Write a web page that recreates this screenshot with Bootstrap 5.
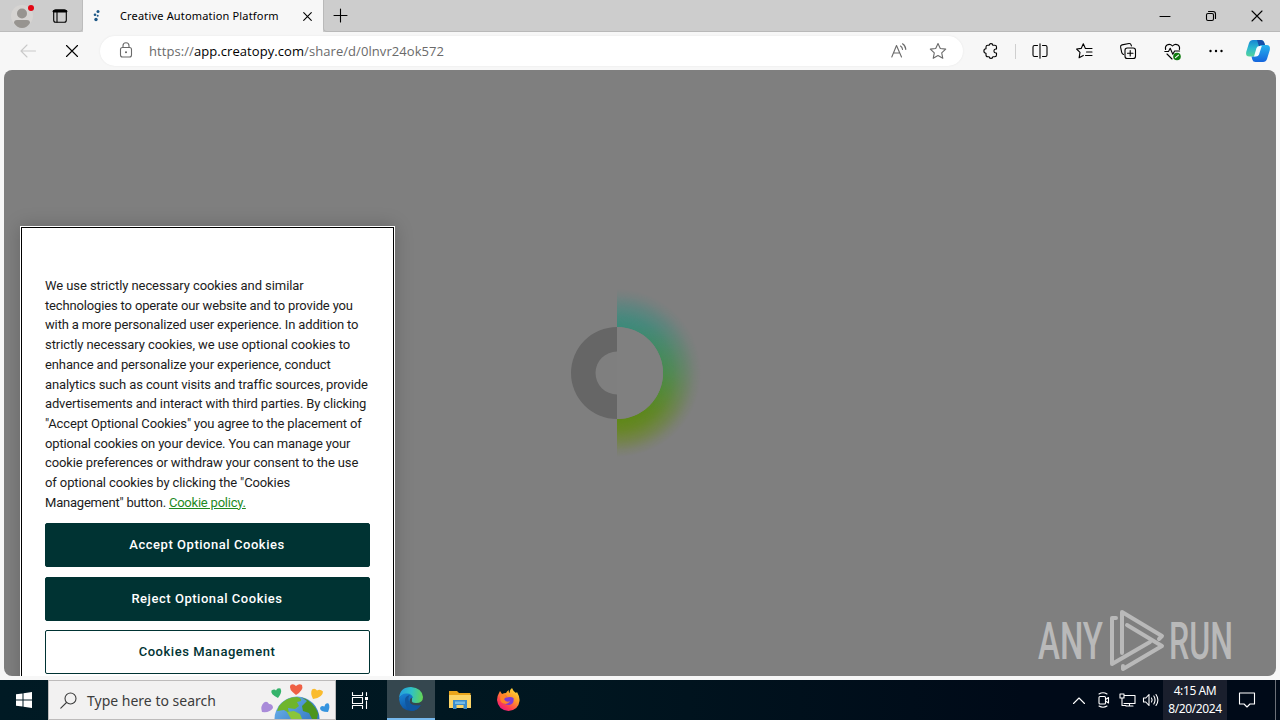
<!DOCTYPE html>
<html lang="en">
<head>
    <meta charset="UTF-8">
    <meta name="viewport" content="width=device-width, initial-scale=1.0">
    <title>Creative Automation Platform</title>
    <link href="https://cdn.jsdelivr.net/npm/bootstrap@5.3.0/dist/css/bootstrap.min.css" rel="stylesheet">
    <style>
        body { height: 720px; overflow: hidden; background: #f7f7f7; font-family: "Noto Sans", "Open Sans", sans-serif; color: #000; }
        svg { display: block; flex: none; overflow: visible; }
        .line-icon { fill: none; stroke: currentColor; stroke-width: 1.1; stroke-linecap: round; stroke-linejoin: round; }

        /* tab strip */
        .tab-strip { height: 32px; background: #cdcdcd; }
        .strip-left { width: 83px; padding-left: 11px; gap: 19px; border-bottom: 1px solid #bcbcbc; border-right: 1px solid #bcbcbc; border-bottom-right-radius: 4px; }
        .browser-tab { width: 240px; background: #f7f7f7; padding: 0 11px 0 9px; }
        .tab-title { font-size: 11px; margin-left: 19px; letter-spacing: .17px; white-space: nowrap; width: 178px; }
        .strip-right { border-bottom: 1px solid #b9b9b9; border-left: 1px solid #b9b9b9; border-bottom-left-radius: 4px; padding-left: 9px; }
        .win-btn { width: 46px; }

        /* address row */
        .tool-row { height: 38px; padding-left: 6px; }
        .nav-btn { width: 44px; }
        .address { width: 863px; height: 30px; border-radius: 15px; background: #fff; margin-left: 6px; padding: 0 16px 0 19px; box-shadow: 0 0 2px #e4e4e4; color: #6a6a6a; }
        .lock-icon { margin-bottom: 2px; }
        .address-text { font-family: "Open Sans", sans-serif; font-size: 13px; letter-spacing: .07px; margin-left: 16px; padding-top: 1px; white-space: nowrap; }
        .star-icon { margin-left: 22px; }
        .tool-btn { width: 44px; }
        .puzzle-btn { margin-left: 6px; }
        .copilot-btn { width: 40px; }
        .tool-sep { width: 1px; height: 15px; background: #cfcfcf; margin: 0 2px; }

        /* page area */
        .page-view { height: 606px; margin: 0 4px; background: #7f7f7f; border-radius: 8px; }
        .loader { left: 536px; top: 203px; }
        .brand-mark { left: 1030px; top: 536px; }
        .cookie-box { left: 16px; top: 156px; width: 375px; height: 470px; background: #fff; border: 1px solid #fff; outline: 1px solid #000; outline-offset: -2px; padding: 49px 24px 0; box-shadow: 0 0 18px rgba(0, 0, 0, .2); }
        .cookie-copy { font-family: Roboto, sans-serif; font-size: 13px; line-height: 19.71px; letter-spacing: -.11px; color: #1c1c1c; white-space: nowrap; margin-bottom: 11px; }
        .cookie-copy a { color: #1f8a1f; }
        .copy-wide { letter-spacing: -.07px; }
        .copy-tight { letter-spacing: -.15px; }
        .copy-last { letter-spacing: -.21px; }
        .cookie-btn { height: 44px; border-radius: 2px; border: 1px solid #033; background: #033; color: #fff; font-family: Roboto, sans-serif; font-weight: 500; font-size: 13px; letter-spacing: .54px; padding: 0 1px 2px 0; }
        .cookie-btn-second { margin-top: 10px; }
        .cookie-btn-plain { background: #fff; color: #033; margin-top: 9px; }

        /* taskbar */
        .task-row { height: 40px; margin-top: 4px; background: linear-gradient(90deg, #001a24, #001620 45%, #000a18 80%); color: #fff; }
        .task-start { width: 48px; }
        .task-search { width: 288px; background: #f2f1f1; border: 1px solid #bdbbbb; color: #3c3c3c; padding-left: 11px; }
        .search-label { font-size: 14px; margin-left: 10px; width: 174px; white-space: nowrap; }
        .task-view { width: 51px; padding-right: 2px; }
        .task-app { width: 49px; }
        .task-active { width: 48px; background: #35474f; border-bottom: 2px solid #76b9ed; }
        .tray-btn { width: 24px; }
        .clock { width: 64px; background: #1a1f2d; font-size: 12px; line-height: 18px; letter-spacing: -.4px; }
        .notify { width: 48px; }
        .desk-edge { width: 5px; border-left: 1px solid #6b7078; }
    </style>
</head>
<body class="d-flex flex-column">

    <header class="tab-strip d-flex flex-shrink-0">
        <div class="strip-left d-flex align-items-center">
            <svg width="23" height="26" viewBox="0 0 23 26">
                <circle cx="11" cy="13" r="11" fill="#d6d4d2"/>
                <circle cx="11" cy="10.5" r="5" fill="#979490"/>
                <path d="M3 20q0-3 3-3h10q3 0 3 3q-3 5-8 5t-8-5z" fill="#979490"/>
                <circle cx="20" cy="5" r="3" fill="#e30613"/>
            </svg>
            <svg width="14" height="14" viewBox="0 0 14 14" class="line-icon">
                <rect x=".7" y=".7" width="12.6" height="12.6" rx="2"/>
                <path d="M1 2.3h12" stroke-width="2.6"/><path d="M4 3v10"/>
            </svg>
        </div>
        <div class="browser-tab d-flex align-items-center">
            <svg width="9" height="14" viewBox="0 0 9 14" fill="#1c5786">
                <circle cx="6" cy="2.5" r="1.5"/><circle cx="3" cy="5.8" r="1.3"/><circle cx="5.7" cy="6.8" r="1"/><circle cx="4" cy="10.5" r="1.7"/>
            </svg>
            <span class="tab-title">Creative Automation Platform</span>
            <svg width="9" height="9" viewBox="0 0 9 9" class="line-icon ms-auto"><path d="M.7.7l7.6 7.6M8.3.7L.7 8.3"/></svg>
        </div>
        <div class="strip-right d-flex align-items-center flex-grow-1">
            <svg width="14" height="14" viewBox="0 0 14 14" class="line-icon"><path d="M7.5 0v13M1 6.5h13"/></svg>
            <div class="d-flex align-items-center ms-auto">
                <div class="win-btn d-flex justify-content-center"><svg width="10" height="10" class="line-icon"><path d="M0 5.5h10"/></svg></div>
                <div class="win-btn d-flex justify-content-center">
                    <svg width="10" height="10" viewBox="0 0 10 10" class="line-icon"><rect x=".5" y="2.5" width="7" height="7" rx="1.5"/><path d="M2.5.5H7q2.5 0 2.5 2.5v4.5"/></svg>
                </div>
                <div class="win-btn d-flex justify-content-center"><svg width="10" height="10" class="line-icon"><path d="M0 0l10 10M10 0L0 10"/></svg></div>
            </div>
        </div>
    </header>

    <div class="tool-row d-flex align-items-center flex-shrink-0">
        <div class="nav-btn d-flex justify-content-center">
            <svg width="16" height="14" viewBox="0 0 16 14" class="line-icon" color="#c9c9c9"><path d="M15.5 7H1M7 1L1 7l6 6"/></svg>
        </div>
        <div class="nav-btn d-flex justify-content-center">
            <svg width="12" height="12" viewBox="0 0 12 12" class="line-icon"><path d="M.5.5l11 11M11.5.5l-11 11"/></svg>
        </div>
        <div class="address d-flex align-items-center flex-shrink-0">
            <svg width="14" height="16" viewBox="0 0 14 16" class="line-icon lock-icon"><rect x="1.5" y="5.5" width="11" height="9.5" rx="2"/><path d="M4 5.5V3.8a3 3 0 0 1 6 0v1.7"/><circle cx="7" cy="10.2" r=".5" fill="currentColor"/></svg>
            <span class="address-text">https://<span class="text-black">app.creatopy.com</span>/share/d/0lnvr24ok572</span>
            <svg width="16" height="16" viewBox="0 0 16 16" class="line-icon ms-auto"><path d="M.8 14L5.5 2.5 10.5 14M2.5 10h6.3M9.5 3q1.8 1 2 3.4M11.5.8q3 1.8 3.3 5.6"/></svg>
            <svg width="18" height="18" viewBox="0 0 18 18" class="line-icon star-icon"><path d="M9 1.5l2.3 5 5.4.6-4 3.7 1.1 5.5L9 13.6l-4.8 2.7 1.1-5.5-4-3.7 5.4-.6z"/></svg>
        </div>
        <div class="tool-btn puzzle-btn d-flex justify-content-center">
            <svg width="16" height="16" viewBox="0 0 16 16" class="line-icon"><path d="M3 4Q3 2.3 4.7 2.3H6.2Q6.2.6 8 .6t1.8 1.7h2q1.700 0 1.700 1.700v2h-.8q-1.800.2-1.800 2t1.800 2h.8v2q0 1.700-1.700 1.700h-2Q9.800 15.400 8 15.400t-1.800-1.700H4.700Q3 13.700 3 12v-1.800Q.9 10.200.9 8T3 5.800z"/></svg>
        </div>
        <div class="tool-sep"></div>
        <div class="tool-btn d-flex justify-content-center">
            <svg width="16" height="16" viewBox="0 0 16 16" class="line-icon"><path d="M5.5 2.500H2.500q-1.500 0-1.500 1.500v8q0 1.500 1.500 1.500h3M10.500 2.500h3q1.500 0 1.500 1.500v8q0 1.500-1.500 1.500h-3M8 .7v14.600"/></svg>
        </div>
        <div class="tool-btn d-flex justify-content-center">
            <svg width="17" height="16" viewBox="0 0 17 16" class="line-icon"><path d="M10.500 5.500L9.400 5.400 7.300.8 5.200 5.400.6 6l3.400 3.300-.9 5.500 4.200-2.400M10.500 5.500h5.500M10.500 9h5.500M9.500 12.500H16"/></svg>
        </div>
        <div class="tool-btn d-flex justify-content-center">
            <svg width="16" height="16" viewBox="0 0 16 16" class="line-icon"><rect x="5" y="5" width="10.500" height="10.500" rx="2.300"/><path d="M10.200 7.500v5.500M7.500 10.200H13M3.500 11.500Q2 11 1.700 9.400L.6 4.200Q.3 2.300 2 1.900L9 .5q1.800-.2 2.200 1.600l.2.800"/></svg>
        </div>
        <div class="tool-btn d-flex justify-content-center">
            <svg width="17" height="17" viewBox="0 0 17 17" class="line-icon">
                <path d="M1.600 6.500Q.8 3.500 3 2q3-1.700 5.500 1 2.500-2.700 5.500-1 2.200 1.500 1.400 4.500M.8 8.500h3.700l1.700-3.200 2.600 6 1.800-3.300h5M3 11l5 5"/>
                <circle cx="13" cy="13.500" r="3.800" fill="#107c10" stroke="none"/><path d="M11.500 14.700l3-2.600" stroke="#fff"/>
            </svg>
        </div>
        <div class="tool-btn d-flex justify-content-center">
            <svg width="14" height="4" viewBox="0 0 14 4"><circle cx="1.500" cy="2" r="1.200"/><circle cx="7" cy="2" r="1.200"/><circle cx="12.500" cy="2" r="1.200"/></svg>
        </div>
        <div class="copilot-btn d-flex justify-content-center">
            <svg width="24" height="22" viewBox="0 0 24 22">
                <defs>
                    <linearGradient id="copA" x1="0" y1="0" x2="0" y2="1"><stop offset="0" stop-color="#1685d3"/><stop offset=".5" stop-color="#2cb9cf"/><stop offset="1" stop-color="#55d39a"/></linearGradient>
                    <linearGradient id="copB" x1="0" y1="0" x2="0" y2="1"><stop offset="0" stop-color="#25b3ee"/><stop offset="1" stop-color="#1565dd"/></linearGradient>
                </defs>
                <path d="M7 0h8q2.500 0 3.200 2.500L19 5h-3q-2 0-2.700 2.200L11 14q-.8 2.500-3 2.500H3.500Q-.7 16.500.2 12L3 3Q4 0 7 0z" fill="url(#copA)"/>
                <path d="M11 0h4q2.500 0 3.200 2.500L19 5h-3q-2 0-2.700 2.200z" fill="#164fa8"/>
                <path d="M17 22H9.500q-2.500 0-3.200-2.500L5.500 16.500H8q2.200 0 3-2.500l2.300-6.800Q14 5 16 5h4.500q4.200 0 3.300 5L21 19q-1 3-4 3z" fill="url(#copB)"/>
                <path d="M10.500 8q.8-2 3-2h2.300l-2.800 8.500q-.8 2-3 2H8z" fill="#f5fbff"/>
            </svg>
        </div>
    </div>

    <main class="page-view position-relative overflow-hidden flex-shrink-0">
        <!-- half ring with coloured glow, centre at 77,100 -->
        <svg class="loader position-absolute" width="180" height="200" viewBox="0 0 180 200">
            <defs>
                <linearGradient id="glowHue" x1="0" y1="0" x2="0" y2="1">
                    <stop offset="0" stop-color="#3a8b86"/><stop offset=".22" stop-color="#3c8a7a"/><stop offset=".5" stop-color="#4a8b4c"/><stop offset=".73" stop-color="#5c881b"/><stop offset="1" stop-color="#6b8800"/>
                </linearGradient>
                <radialGradient id="glowFade" gradientUnits="userSpaceOnUse" cx="77" cy="100" r="84">
                    <stop offset=".54" stop-color="#fff"/><stop offset=".67" stop-color="#ccc"/><stop offset=".8" stop-color="#777"/><stop offset=".92" stop-color="#222"/><stop offset="1" stop-color="#000"/>
                </radialGradient>
                <mask id="glowMask" maskUnits="userSpaceOnUse" x="77" y="10" width="100" height="180">
                    <rect x="77" y="10" width="100" height="180" fill="url(#glowFade)"/>
                    <circle cx="77" cy="100" r="46" fill="#000"/>
                </mask>
            </defs>
            <rect x="77" y="15" width="85" height="170" fill="url(#glowHue)" mask="url(#glowMask)"/>
            <path d="M77 54a46 46 0 0 1 0 92z" fill="#808080"/>
            <path d="M77 54a46 46 0 0 0 0 92v-24.500a21.500 21.500 0 0 1 0-43z" fill="#666"/>
        </svg>

        <svg class="brand-mark position-absolute" width="210" height="70" viewBox="0 0 210 70">
            <g fill="#b9b9b9" font-family="Roboto, sans-serif" font-size="51" font-weight="500">
                <text x="4" y="53" textLength="65" lengthAdjust="spacingAndGlyphs">ANY</text>
                <text x="135" y="53" textLength="64" lengthAdjust="spacingAndGlyphs">RUN</text>
            </g>
            <g fill="none" stroke="#b9b9b9" stroke-width="4" stroke-linejoin="round" stroke-linecap="round">
                <path d="M88 47V6l40 24-3 3"/>
                <path d="M82 12h-4v46l38-22"/>
                <path d="M93 19l35 21-39 23v-3"/>
            </g>
        </svg>

        <section class="cookie-box position-absolute">
            <p class="cookie-copy"><span class="copy-wide">We use strictly necessary cookies and similar</span><br>
                <span class="copy-tight">technologies to operate our website and to provide you</span><br>
                <span class="copy-tight">with a more personalized user experience. In addition to</span><br>
                <span class="copy-wide">strictly necessary cookies, we use optional cookies to</span><br>
                enhance and personalize your experience, conduct<br>
                analytics such as count visits and traffic sources, provide<br>
                <span class="copy-tight">advertisements and interact with third parties. By clicking</span><br>
                <span class="copy-tight">"Accept Optional Cookies" you agree to the placement of</span><br>
                <span class="copy-tight">optional cookies on your device. You can manage your</span><br>
                cookie preferences or withdraw your consent to the use<br>
                of optional cookies by clicking the "Cookies<br>
                <span class="copy-last">Management" button. <a href="#">Cookie policy.</a></span></p>
            <div class="d-grid">
                <button type="button" class="btn cookie-btn">Accept Optional Cookies</button>
                <button type="button" class="btn cookie-btn cookie-btn-second">Reject Optional Cookies</button>
                <button type="button" class="btn cookie-btn cookie-btn-plain">Cookies Management</button>
            </div>
        </section>
    </main>

    <footer class="task-row d-flex flex-shrink-0">
        <div class="task-start d-flex align-items-center justify-content-center">
            <svg width="16" height="16" viewBox="0 0 16 16" fill="#fff"><path d="M0 2.300L6.500 1.400v6.100H0zM7.500 1.200L16 0v7.500H7.500zM0 8.500h6.500v6.100L0 13.700zM7.500 8.500H16V16l-8.500-1.200z"/></svg>
        </div>
        <div class="task-search d-flex align-items-center">
            <svg width="17" height="17" viewBox="0 0 17 17" class="line-icon"><circle cx="10.500" cy="6.500" r="5.500"/><path d="M6.500 10.500L.8 16.200"/></svg>
            <span class="search-label">Type here to search</span>
            <svg width="70" height="38" viewBox="0 0 70 38">
                <defs>
                    <linearGradient id="sea" x1="0" y1="0" x2="1" y2="1"><stop offset="0" stop-color="#72b8f0"/><stop offset="1" stop-color="#1b5fb0"/></linearGradient>
                    <clipPath id="globeCut"><path d="M0 0h70v38H0z"/></clipPath>
                </defs>
                <g clip-path="url(#globeCut)">
                    <circle cx="36" cy="38" r="22.500" fill="url(#sea)"/>
                    <path d="M18 25Q25 16 36 16q5 1 4 4l-4 1 2 4-4 3-7-1 1 5-5-3-7 1z" fill="#6fb52c"/>
                    <path d="M26 31l7-1 6 3 2 5H30z" fill="#8bc53a"/>
                    <path d="M40 16q12 4 17 16l-1 6h-5l-3-6-6-2-1-5 5-5z" fill="#4d951c"/>
                </g>
                <path d="M35 14Q27 8 29.500 4q3-2 5.500 1 3-3 6-1 2 5-6 10z" fill="#ef6045"/>
                <path d="M17 17Q9 13 10.500 9.500q3-2 4.500 0 1-3 4.500-2 2 4-2.500 9.500z" fill="#35b36b"/>
                <path d="M52 18Q49 12 51 8.500q3-2 5 1 3-2 6 1 0 6-10 7.500z" fill="#fabb2d"/>
                <path d="M1 31Q-1 25 3 21.500q3-2 5 1.500 4 0 4 4-3 5-11 4z" fill="#a98bd9"/>
                <path d="M67 31q-8 0-8-4 1-3 4.500-1.500 1-4 4-3 2 3-.5 8.500z" fill="#3594df"/>
            </svg>
        </div>
        <div class="task-view d-flex align-items-center justify-content-center">
            <svg width="17" height="17" viewBox="0 0 17 17" class="line-icon" stroke-linecap="butt"><path d="M.5.5v3h10v-3M.5 16.500v-3h10v3M.5 5.500h10v6H.5zM14.500.5v3M14.500 9v7.500"/><path d="M13 5h3v3h-3z" fill="#fff" stroke="none"/></svg>
        </div>
        <div class="task-active d-flex align-items-center justify-content-center">
            <svg width="24" height="24" viewBox="0 0 24 24">
                <defs>
                    <linearGradient id="edgeTop" x1="0" y1=".5" x2="1" y2=".6"><stop offset="0" stop-color="#249ddf"/><stop offset=".5" stop-color="#2fc2c5"/><stop offset="1" stop-color="#65d552"/></linearGradient>
                    <linearGradient id="edgeLow" x1="0" y1="0" x2=".5" y2="1"><stop offset="0" stop-color="#1986d8"/><stop offset="1" stop-color="#0c4d9b"/></linearGradient>
                </defs>
                <path d="M0 11Q1 0 12 0q11 1 12 10 0 6-7 6-5 0-4-3Q14 8 8 7 3 7 0 11z" fill="url(#edgeTop)"/>
                <path d="M0 12Q2 6 8 6.500q5 0 6 4.500-2-1-3 1.500Q9 18 17 19q3 0 5-1-4 6-10 6Q1 23 0 12z" fill="url(#edgeLow)"/>
                <path d="M6 13q0-4 5-5-3 3-.5 7.500Q13 19 21.500 18.500 18 24 12 24q-6-3-6-11z" fill="#10569f"/>
            </svg>
        </div>
        <div class="task-app d-flex align-items-center justify-content-center">
            <svg width="22" height="20" viewBox="0 0 22 20">
                <path d="M0 1h8l2 2h11.500v4H0z" fill="#e9a51c"/><path d="M0 5h22v13H0z" fill="#fbd467"/><path d="M4 10h14v9h-3.500v-4h-7v4H4z" fill="#3b8ccb"/><path d="M6 11.500h10V14H6z" fill="#73bbe7"/>
            </svg>
        </div>
        <div class="task-app d-flex align-items-center justify-content-center">
            <svg width="23" height="24" viewBox="0 0 23 24">
                <defs><linearGradient id="fox" x1=".9" y1="0" x2=".2" y2="1"><stop offset="0" stop-color="#ffe53b"/><stop offset=".4" stop-color="#ff9a28"/><stop offset=".75" stop-color="#ff3d50"/><stop offset="1" stop-color="#e4128b"/></linearGradient></defs>
                <path d="M2 5l1-2 2 3q2-1 4-1 1-2 3-3-1 2 1 3-1-3 2-5 1 3 4 5l1-1q3 5 2.500 9-1 9-11 10Q1 22 0 12 0 8 2 5z" fill="url(#fox)"/>
                <path d="M6 7q3 0 4 1.500L8.500 10q5-2 8 0 1 6-4 7-6 0-7.500-4Q5.500 9 6 7z" fill="#7d3bd6"/>
                <path d="M3.500 7q3-2 6.500 1.500l-3 2.500q2 4 6 2-2 4-6.500 2.500T3.500 7z" fill="#ff8427"/>
            </svg>
        </div>

        <div class="d-flex ms-auto">
            <div class="tray-btn d-flex align-items-center justify-content-center"><svg width="12" height="7" viewBox="0 0 12 7" class="line-icon"><path d="M.5 6.500L6 1l5.500 5.500"/></svg></div>
            <div class="tray-btn d-flex align-items-center justify-content-center"><svg width="13" height="16" viewBox="0 0 13 16" class="line-icon"><rect x="2" y="4.500" width="6.500" height="7.500" rx="1"/><path d="M8.500 7.500l3-2v5.500l-3-2M2 2q4-2.500 8 0M2 14q4 2.500 8 0"/></svg></div>
            <div class="tray-btn d-flex align-items-center justify-content-center"><svg width="17" height="14" viewBox="0 0 17 14" class="line-icon"><path d="M5 2.500h11v8H5M10.500 10.500v2.500M7 13h7M1 1h4v4H1zM3 5v7.500h4"/></svg></div>
            <div class="tray-btn d-flex align-items-center justify-content-center"><svg width="16" height="14" viewBox="0 0 16 14" class="line-icon"><path d="M.5 5h2.300L6 1.500v11L2.800 9H.5zM8.500 5q1.300 2 0 4M10.800 3q2.500 4 0 8M13 1.500q3.800 5.500 0 11"/></svg></div>
            <div class="clock d-flex flex-column justify-content-center text-center"><span>4:15 AM</span><span>8/20/2024</span></div>
            <div class="notify d-flex align-items-center justify-content-center"><svg width="16" height="16" viewBox="0 0 16 16" class="line-icon me-2"><path d="M.5 1h15v11H11L8 15l-3-3H.5z"/></svg></div>
            <div class="desk-edge"></div>
        </div>
    </footer>

    <script src="https://cdn.jsdelivr.net/npm/bootstrap@5.3.0/dist/js/bootstrap.bundle.min.js"></script>
</body>
</html>
